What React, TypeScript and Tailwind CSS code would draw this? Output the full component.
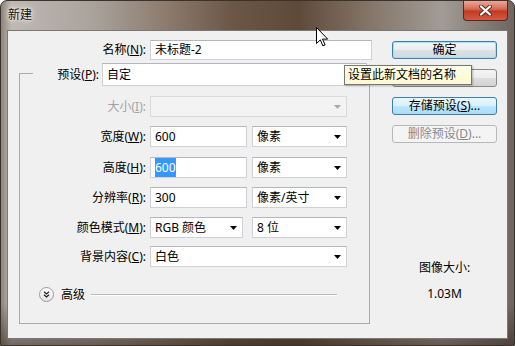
import type { ReactNode } from "react";

function Mn(props: { text: string; k: string }) {
  return (
    <>
      {props.text}(<span className="underline">{props.k}</span>):
    </>
  );
}

function Arrow(props: { disabled?: boolean }) {
  return (
    <svg width="7" height="4" viewBox="0 0 7 4" className="shrink-0">
      <path d="M0 0h7L3.5 4z" fill={props.disabled ? "#a9a9a9" : "#000"} />
    </svg>
  );
}

function Field(props: { className?: string; children?: ReactNode }) {
  return (
    <div
      className={`flex h-[21px] items-center border border-[#cfd1d5] border-t-[#b3b6bc] bg-white pl-[4px] leading-[19px] ${props.className ?? ""}`}
    >
      {props.children}
    </div>
  );
}

function Select(props: { className?: string; value?: string; disabled?: boolean }) {
  return (
    <div
      className={`flex h-[21px] items-center justify-between border pl-[4px] pr-[5px] leading-[19px] ${
        props.disabled ? "border-[#d9d9d9] bg-[#f3f3f3]" : "border-[#cfd1d5] border-t-[#b3b6bc] bg-white"
      } ${props.className ?? ""}`}
    >
      <span>{props.value}</span>
      <Arrow disabled={props.disabled} />
    </div>
  );
}

function Row(props: { label: ReactNode; disabled?: boolean; className?: string; children: ReactNode }) {
  return (
    <div className={`flex items-center ${props.className ?? ""}`}>
      <div className={`w-[130px] pr-[4px] text-right ${props.disabled ? "text-[#a3a3a3]" : ""}`}>{props.label}</div>
      {props.children}
    </div>
  );
}

function Btn(props: { kind: "default" | "normal" | "hover" | "disabled"; children?: ReactNode }) {
  const styles = {
    default:
      "border-[#3c7fb1] bg-[linear-gradient(180deg,#f3f6f8_0%,#e8edf0_50%,#dbe2e6_51%,#d2dade_100%)] shadow-[inset_0_0_0_1px_#a8def3]",
    normal:
      "border-[#8a8a8a] bg-[linear-gradient(180deg,#f4f4f4_0%,#ececec_50%,#dedede_51%,#d2d2d2_100%)]",
    hover:
      "border-[#3c7fb1] bg-[linear-gradient(180deg,#eaf6fd_0%,#d9f0fc_50%,#bee6fd_51%,#a9dbf6_100%)]",
    disabled: "border-[#b5b9bc] bg-[#f4f4f4] text-[#8a8a8a]",
  }[props.kind];
  return (
    <div className={`flex h-[18px] w-[105px] items-center justify-center rounded-[3px] border leading-[16px] ${styles}`}>
      {props.children}
    </div>
  );
}

export default function App() {
  return (
    <div className="relative h-[346px] w-[515px] overflow-hidden rounded-t-[7px] border border-[#3a322c] bg-[linear-gradient(180deg,rgba(0,0,0,0)_0%,rgba(0,0,0,0)_88%,rgba(50,38,30,0.55)_100%),linear-gradient(90deg,#8d847c_0%,#bfb9b3_2%,#aaa29b_18%,#8c7c6e_32%,#6c5746_45%,#5f4a3a_58%,#847669_72%,#a39b95_86%,#6f655e_100%)] font-['Noto_Sans','Noto_Sans_CJK_SC',sans-serif] text-[12px] text-black">
      <div className="flex h-[29px] items-start justify-between">
        <div className="pl-[7px] pt-[5px] text-[12px] leading-[17px] text-[#111] [text-shadow:0_0_6px_#ffffff,0_0_3px_#ffffff]">
          新建
        </div>
        <div className="mr-[6px] flex h-[20px] w-[45px] items-center justify-center rounded-b-[4px] border border-t-0 border-[#4e2a22] bg-[linear-gradient(180deg,#e9a89a_0%,#d66f58_40%,#c23c24_55%,#d45a40_100%)]">
          <svg width="13" height="11" viewBox="0 0 13 11">
            <path d="M2 1.5l9 8M11 1.5l-9 8" stroke="#5a2a20" strokeWidth="4" strokeLinecap="round" />
            <path d="M2 1.5l9 8M11 1.5l-9 8" stroke="#ffffff" strokeWidth="2.2" strokeLinecap="round" />
          </svg>
        </div>
      </div>

      <div className="mx-[6px] flex h-[309px] border border-[#7c7772] bg-[#f0f0f0]">
        <div className="flex flex-col">
          <div className="mt-[9px] flex items-center">
            <div className="w-[142px] pr-[4px] text-right">
              <Mn text="名称" k="N" />
            </div>
            <div className="flex h-[20px] w-[222px] items-center border border-[#cfd1d5] border-t-[#b3b6bc] bg-white pl-[4px]">
              未标题-2
            </div>
          </div>

          <div className="ml-[11px] mt-[13px] w-[351px] border border-[#aaaaaa] pb-[21px]">
            <div className="-mt-[11px] ml-[13px] flex items-center bg-[#f0f0f0]">
              <div className="w-[69px] pr-[3px] text-right">
                <Mn text="预设" k="P" />
              </div>
              <Select className="h-[23px] w-[265px]" value="自定" />
            </div>

            <Row className="mt-[10px]" disabled label={<Mn text="大小" k="I" />}>
              <Select disabled className="w-[197px]" />
            </Row>

            <Row className="mt-[9px]" label={<Mn text="宽度" k="W" />}>
              <Field className="w-[97px]">600</Field>
              <Select className="ml-[5px] w-[95px]" value="像素" />
            </Row>

            <Row className="mt-[10px]" label={<Mn text="高度" k="H" />}>
              <Field className="w-[97px]">
                <span className="bg-[#3399ff] text-white">600</span>
              </Field>
              <Select className="ml-[5px] w-[95px]" value="像素" />
            </Row>

            <Row className="mt-[9px]" label={<Mn text="分辨率" k="R" />}>
              <Field className="w-[97px]">300</Field>
              <Select className="ml-[5px] w-[95px]" value="像素/英寸" />
            </Row>

            <Row className="mt-[9px]" label={<Mn text="颜色模式" k="M" />}>
              <Select className="w-[93px]" value="RGB 颜色" />
              <Select className="ml-[9px] w-[95px]" value="8 位" />
            </Row>

            <Row className="mt-[8px]" label={<Mn text="背景内容" k="C" />}>
              <Select className="w-[197px]" value="白色" />
            </Row>

            <div className="ml-[19px] mr-[32px] mt-[20px] flex items-center">
              <div className="flex h-[15px] w-[15px] items-center justify-center rounded-full border border-[#9c9c9c] bg-[linear-gradient(180deg,#ffffff_0%,#e4e4e4_100%)]">
                <svg width="7" height="7" viewBox="0 0 7 7">
                  <path d="M1 0.8l2.5 2.2L6 0.8M1 3.8l2.5 2.2L6 3.8" stroke="#222" strokeWidth="1.3" fill="none" />
                </svg>
              </div>
              <span className="ml-[7px] leading-[15px]">高级</span>
              <div className="ml-[6px] h-[2px] flex-1 border-t border-b border-t-[#b9b9b9] border-b-white" />
            </div>
          </div>
        </div>

        <div className="ml-[20px] flex flex-col">
          <div className="mt-[10px] flex flex-col gap-[10px]">
            <Btn kind="default">确定</Btn>
            {/* reset button: its caption sits under the tooltip */}
            <Btn kind="normal" />
            <Btn kind="hover">
              存储预设(<span className="underline">S</span>)...
            </Btn>
            <Btn kind="disabled">
              删除预设(<span className="underline">D</span>)...
            </Btn>
          </div>
          <div className="mt-[116px] text-center leading-[17px]">图像大小:</div>
          <div className="mt-[10px] text-center leading-[15px]">1.03M</div>
        </div>
      </div>

      <div className="absolute left-[343px] top-[64px] flex h-[20px] w-[128px] items-center border border-[#767676] bg-[linear-gradient(180deg,#ffffe8_0%,#fdf8d0_100%)] pl-[3px] leading-[16px] shadow-[1px_1px_2px_rgba(0,0,0,0.25)]">
        设置此新文档的名称
      </div>

      <svg className="absolute left-[315px] top-[26px]" width="13" height="20" viewBox="0 0 13 20">
        <path
          d="M0.5 0.5v16l3.8-3.6 2.6 6 2.2-1-2.6-5.8h5.2z"
          fill="#ffffff"
          stroke="#000000"
          strokeWidth="1"
          strokeLinejoin="round"
        />
      </svg>
    </div>
  );
}
